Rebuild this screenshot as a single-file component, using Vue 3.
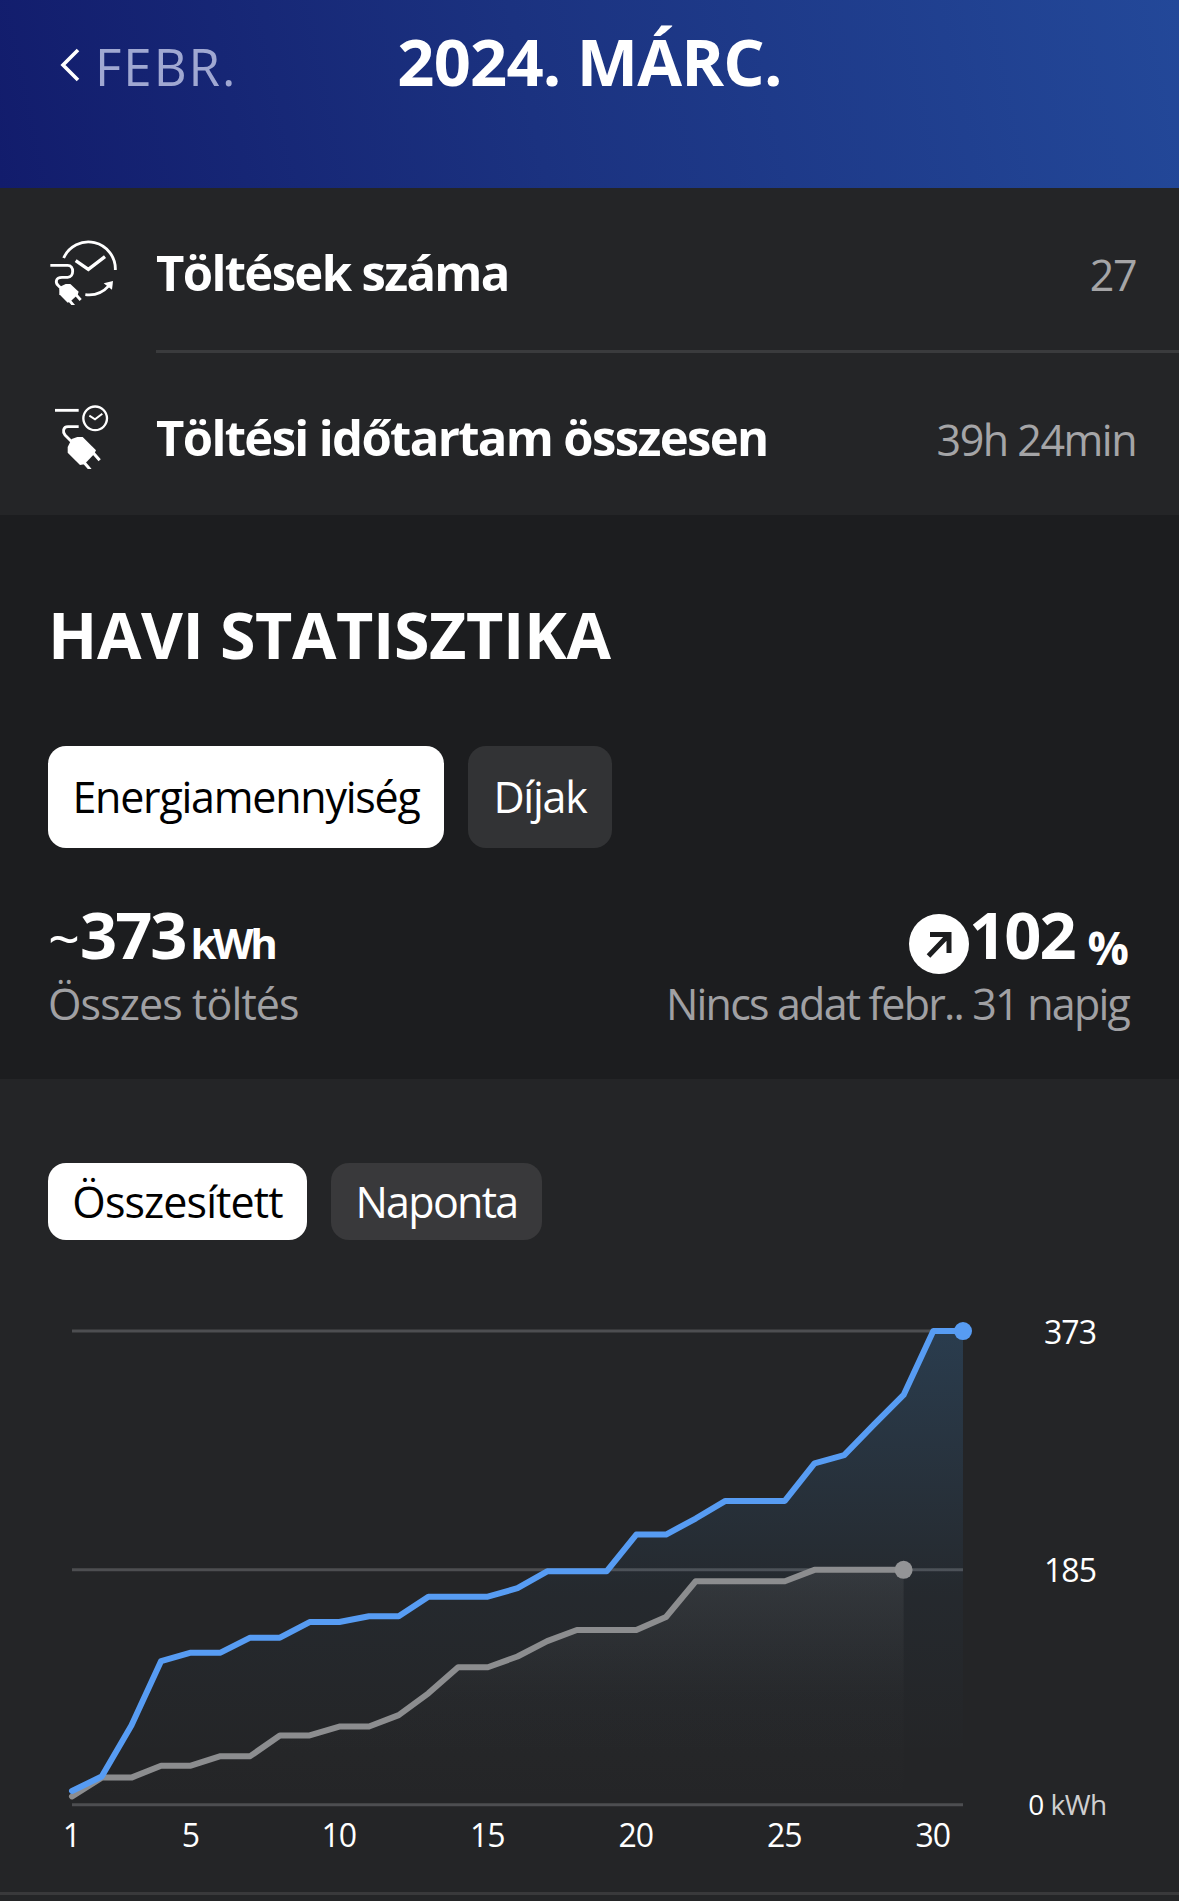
<template>
  <div class="page">
    <header class="month-bar">
      <button class="prev-month" type="button">
        <svg class="chevron" viewBox="0 0 20 34" fill="none">
          <path d="M18 2 3 17l15 15" stroke="currentColor" stroke-width="3.6" />
        </svg>
        <span class="prev-label">FEBR.</span>
      </button>
      <h1 class="month-title">2024. MÁRC.</h1>
    </header>

    <section class="summary">
      <div class="summary-row">
        <!-- Töltések száma -->
        <svg class="row-icon" viewBox="54 39 216 216" fill="none" stroke="#fff" stroke-width="8.5">
          <path d="M101 114A81 81 0 0 1 256 150" />
          <path d="M166 224A81 81 0 0 0 237 197" />
          <path d="M249 183 221 190 246 209z" fill="#fff" stroke="none" />
          <path d="M137 122 175 148 225 110" stroke-width="10" />
          <path d="M61 136H113C133 136 133 172 113 172H96C76 172 76 188 84 196L96 208" />
          <path d="M93 199 107 192H121L146 215 143 224 122 244 113 248 88 223V208z" fill="#fff" stroke="none" />
          <path d="M136 222 152 240M118 241 132 258" />
        </svg>
        <div class="row-body">
          <span class="row-title">Töltések száma</span>
          <span class="row-value">27</span>
        </div>
      </div>
      <div class="summary-row">
        <!-- Töltési időtartam -->
        <svg class="row-icon" viewBox="54 534 216 216" fill="none" stroke="#fff" stroke-width="8.5">
          <path d="M75 574H146" />
          <circle cx="195.500" cy="598" r="35.500" stroke-width="7" />
          <path d="M178 590 195 601 217 584" stroke-width="6" />
          <path d="M146 623H114C98 623 98 640 105 648L126 669" />
          <path d="M125 660 142 654H158L198 694 192 706 163 736 150 738 113 701V684z" fill="#fff" stroke="none" />
          <path d="M188 700 209 724M161 729 181 752" stroke-width="9" />
        </svg>
        <div class="row-body">
          <span class="row-title">Töltési időtartam összesen</span>
          <span class="row-value">39h 24min</span>
        </div>
      </div>
    </section>

    <section class="stats">
      <h2 class="stats-title">HAVI STATISZTIKA</h2>
      <div class="tabs">
        <button
          v-for="tab in tabs"
          :key="tab.id"
          type="button"
          class="tab"
          :class="[tab.id, { active: tab.id === activeTab }]"
          @click="activeTab = tab.id"
        >
          {{ tab.label }}
        </button>
      </div>
      <div class="figures">
        <div class="figure">
          <div class="figure-line">
            <span class="approx">~</span>
            <span class="figure-number">373</span>
            <span class="figure-unit">kWh</span>
          </div>
          <p class="figure-caption total">Összes töltés</p>
        </div>
        <div class="figure right">
          <div class="figure-line">
            <svg class="trend" viewBox="0 0 60 60" fill="none">
              <circle cx="30" cy="30" r="30" fill="#fff" />
              <path d="M21 20.500H40V39M40 20.500 19.500 42" stroke="#1c1d1f" stroke-width="5" />
            </svg>
            <span class="figure-number">102</span>
            <span class="figure-unit percent">%</span>
          </div>
          <p class="figure-caption">Nincs adat febr.. 31 napig</p>
        </div>
      </div>
    </section>

    <section class="chart-section">
      <div class="modes">
        <button
          v-for="mode in modes"
          :key="mode.id"
          type="button"
          class="mode"
          :class="[mode.id, { active: mode.id === activeMode }]"
          @click="activeMode = mode.id"
        >
          {{ mode.label }}
        </button>
      </div>

      <svg class="chart" viewBox="0 0 1179 652">
        <defs>
          <linearGradient id="fill-current" x1="0" y1="91" x2="0" y2="565" gradientUnits="userSpaceOnUse">
            <stop offset="0" stop-color="#3f8fd8" stop-opacity="0.220" />
            <stop offset="0.550" stop-color="#3f8fd8" stop-opacity="0.040" />
            <stop offset="0.900" stop-color="#3f8fd8" stop-opacity="0" />
          </linearGradient>
          <linearGradient id="fill-previous" x1="0" y1="330" x2="0" y2="565" gradientUnits="userSpaceOnUse">
            <stop offset="0" stop-color="#b0b0b0" stop-opacity="0.110" />
            <stop offset="0.550" stop-color="#909090" stop-opacity="0.020" />
            <stop offset="1" stop-color="#909090" stop-opacity="0" />
          </linearGradient>
        </defs>

        <line v-for="v in [0, 185, 373]" :key="v" class="grid-line" :x1="xOf(1)" :x2="xOf(31)" :y1="yOf(v)" :y2="yOf(v)" />

        <polygon :points="areaOf(current)" fill="url(#fill-current)" />
        <polygon :points="areaOf(previous)" fill="url(#fill-previous)" />
        <polyline class="line previous" :points="lineOf(previous)" />
        <circle class="dot previous" :cx="xOf(29)" :cy="yOf(185)" r="9" />
        <polyline class="line current" :points="lineOf(current)" />
        <circle class="dot current" :cx="xOf(31)" :cy="yOf(373)" r="9" />

        <text v-for="d in days" :key="d" class="axis-label" :x="xOf(d) - 0.5" y="607">{{ d }}</text>
        <text class="axis-label" x="1070" y="103.500">373</text>
        <text class="axis-label" x="1070" y="341.500">185</text>
        <text class="axis-label zero" x="1067.500" y="575">0 <tspan class="axis-unit">kWh</tspan></text>
      </svg>
    </section>
  </div>
</template>

<script setup>
import { ref } from 'vue'

const tabs = [
  { id: 'energy', label: 'Energiamennyiség' },
  { id: 'costs', label: 'Díjak' }
]
const modes = [
  { id: 'total', label: 'Összesített' },
  { id: 'daily', label: 'Naponta' }
]
const activeTab = ref('energy')
const activeMode = ref('total')

const days = [1, 5, 10, 15, 20, 25, 30]

// kWh halmozott értékek naponként
const current = [
  10.9, 22.3, 62.4, 113.2, 119.8, 119.8, 131.6, 131.6, 143.9, 143.9, 148.5, 148.5, 163.9, 163.9, 163.9, 170.6,
  183.8, 183.8, 183.8, 212.8, 212.8, 225.4, 239.3, 239.3, 239.3, 268.9, 275.3, 299.4, 322.7, 373, 373
]
const previous = [
  6.6, 21.4, 21.4, 30.8, 30.8, 38.3, 38.3, 54.6, 54.6, 61.6, 61.6, 70.6, 87.8, 108.3, 108.3, 116.8,
  128.9, 137.6, 137.6, 137.6, 147.9, 176, 176, 176, 176, 185, 185, 185, 185
]

const xOf = (day) => 72 + (day - 1) * 29.7
const yOf = (kwh) => 564.8 - kwh * 1.27

const lineOf = (values) => values.map((v, i) => `${xOf(i + 1)},${yOf(v)}`).join(' ')
const areaOf = (values) => `${xOf(1)},${yOf(0)} ${lineOf(values)} ${xOf(values.length)},${yOf(0)}`
</script>

<style>
body {
  background: #242527;
}
</style>

<style scoped>
* {
  box-sizing: border-box;
}

.page {
  width: 1179px;
  height: 1901px;
  overflow: hidden;
  background: #242527;
  color: #fff;
  font-family: 'Open Sans', 'Noto Sans', sans-serif;
}

button {
  border: none;
  background: none;
  color: inherit;
  font: inherit;
  padding: 0;
  cursor: pointer;
}

/* Header */
.month-bar {
  display: grid;
  grid-template-columns: 1fr auto 1fr;
  align-items: start;
  height: 188px;
  padding: 11px 60px 0;
  background: linear-gradient(78deg, #121c6c 0%, #1b3280 45%, #234899 100%);
}

.prev-month {
  display: flex;
  align-items: center;
  gap: 15px;
  margin-top: 25px;
  line-height: 60px;
}

.chevron {
  width: 20px;
  height: 34px;
  margin-bottom: 2px;
}

.prev-label {
  color: #a0a8d2;
  font-size: 51px;
  letter-spacing: 2px;
}

.month-title {
  margin: 0;
  font-size: 65px;
  font-weight: 700;
  line-height: 100px;
  letter-spacing: -0.8px;
}

/* Summary */
.summary-row {
  display: flex;
  align-items: center;
  gap: 36px;
  height: 162px;
  padding-left: 48px;
}

.summary-row + .summary-row {
  height: 165px;
}

.row-icon {
  width: 72px;
  height: 72px;
  flex-shrink: 0;
}

.row-body {
  flex: 1;
  display: flex;
  justify-content: space-between;
  align-items: baseline;
  height: 100%;
  padding-right: 43px;
  line-height: 168px;
}

.summary-row + .summary-row .row-body {
  border-top: 3px solid #3a3b3d;
}

.row-title {
  font-size: 49px;
  font-weight: 700;
  letter-spacing: -1.65px;
}

.row-value {
  color: #a5a5a7;
  font-size: 43px;
  letter-spacing: -1.5px;
}

/* Monthly statistics */
.stats {
  height: 564px;
  padding: 79px 50px 0 48px;
  background: #1c1d1f;
}

.stats-title {
  margin: 0;
  font-size: 64.5px;
  font-weight: 700;
  line-height: 80px;
  letter-spacing: -0.4px;
}

.tabs {
  display: flex;
  gap: 24px;
  margin-top: 72px;
}

.tab {
  height: 102px;
  padding-bottom: 1px;
  border-radius: 18px;
  background: #323335;
  font-size: 43px;
  letter-spacing: -1.25px;
}

.tab.energy {
  width: 396px;
}

.tab.costs {
  width: 144px;
}

.tab.active,
.mode.active {
  background: #fff;
  color: #000;
}

.figures {
  display: flex;
  justify-content: space-between;
  margin-top: 51px;
}

.figure-line {
  display: flex;
  align-items: baseline;
  height: 70px;
  line-height: 70px;
}

.right .figure-line {
  justify-content: flex-end;
}

.approx {
  font-size: 56px;
}

.figure-number {
  font-size: 65px;
  font-weight: 700;
  letter-spacing: -2px;
}

.figure-unit {
  margin-left: 5px;
  font-size: 42px;
  font-weight: 700;
  letter-spacing: -3.5px;
}

.percent {
  margin-left: 13px;
  font-size: 46px;
  letter-spacing: 0;
  transform: translateY(6px);
}

.trend {
  align-self: flex-start;
  width: 60px;
  height: 60px;
  margin-top: 15px;
}

.figure-caption {
  margin: 0;
  color: #a0a0a3;
  font-size: 43px;
  line-height: 70px;
  letter-spacing: -1.8px;
}

.figure-caption.total {
  letter-spacing: -0.9px;
}

/* Chart */
.chart-section {
  border-bottom: 3px solid #39393b;
}

.modes {
  display: flex;
  gap: 24px;
  padding: 84px 48px 0;
}

.mode {
  height: 77px;
  border-radius: 18px;
  background: #39393b;
  font-size: 43px;
}

.mode.total {
  width: 259px;
  letter-spacing: -0.9px;
}

.mode.daily {
  width: 211px;
  letter-spacing: -1.7px;
}

.chart {
  display: block;
  width: 1179px;
  height: 652px;
}

.grid-line {
  stroke: #4d4e51;
  stroke-width: 3;
}

.line {
  fill: none;
  stroke-width: 6;
  stroke-linecap: round;
  stroke-linejoin: round;
}

.line.current {
  stroke: #579cf3;
}

.line.previous {
  stroke: #8c8d8f;
}

.dot.current {
  fill: #579cf3;
}

.dot.previous {
  fill: #939496;
}

.axis-label {
  fill: #fff;
  font-size: 32px;
  font-weight: 500;
  text-anchor: middle;
  letter-spacing: -1px;
}

.axis-label.zero {
  font-size: 28px;
  letter-spacing: -0.5px;
}

.axis-unit {
  fill: #cfcfd0;
}
</style>
